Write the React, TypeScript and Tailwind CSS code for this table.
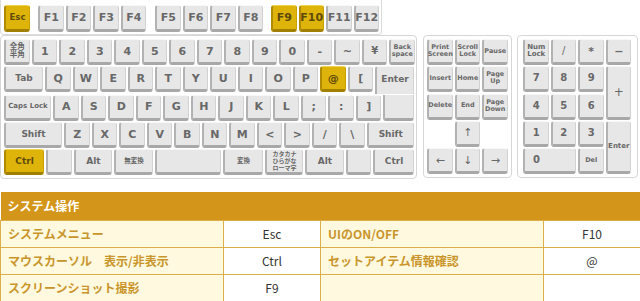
import React from 'react';

type Shape = 'full' | 'top' | 'bottom';

interface KeyProps {
  l?: React.ReactNode;
  w?: string;
  h?: string;
  t?: string;
  hl?: boolean;
  shape?: Shape;
  x?: string;
}

const edges: Record<Shape, string> = {
  full: 'rounded-[3px] border-t border-r border-l-2 border-b-[3px]',
  top: 'rounded-t-[3px] border-t border-r border-l-2',
  bottom: 'rounded-b-[3px] border-r border-l-2 border-b-[3px]',
};

const grey = 'bg-[#e7e7e7] border-t-[#f7f7f7] border-r-[#d2d2d2] border-l-[#b2b2b2] border-b-[#a8a8a8] text-[#686868]';
const gold = 'bg-[#dfb40a] border-t-[#f0d24a] border-r-[#c9a200] border-l-[#b08b00] border-b-[#a17f00] text-[#5e4b08]';

function Key({ l, w = 'w-[25.5px]', h = 'h-[26px]', t = 'text-[11px]', hl, shape = 'full', x = '' }: KeyProps) {
  return (
    <div className={`flex shrink-0 items-center justify-center whitespace-nowrap text-center font-bold leading-none ${edges[shape]} ${hl ? gold : grey} ${w} ${h} ${t} ${x}`}>
      {l}
    </div>
  );
}

const two = (a: string, b: string) => (
  <span className="block shrink-0 whitespace-nowrap leading-[1.05]">
    {a}
    <br />
    {b}
  </span>
);

const row1 = ['1', '2', '3', '4', '5', '6', '7', '8', '9', '0', '-', '~', '¥'];
const row2 = ['Q', 'W', 'E', 'R', 'T', 'Y', 'U', 'I', 'O', 'P', '@', '['];
const row3 = ['A', 'S', 'D', 'F', 'G', 'H', 'J', 'K', 'L', ';', ':', ']'];
const row4 = ['Z', 'X', 'C', 'V', 'B', 'N', 'M', '<', '>', '/', '\\'];

const rows = [
  { name: 'システムメニュー', key: 'Esc', name2: 'UIのON/OFF', key2: 'F10' },
  { name: 'マウスカーソル　表示/非表示', key: 'Ctrl', name2: 'セットアイテム情報確認', key2: '@' },
  { name: 'スクリーンショット撮影', key: 'F9', name2: '', key2: '' },
];

export default function App() {
  return (
    <div className="w-[640px] h-[301px] overflow-hidden bg-white font-['DejaVu_Sans','Noto_Sans_CJK_JP',sans-serif]">
      <div className="h-[192px]">
        {/* function keys */}
        <div className="flex h-[35px] w-[382px] items-start rounded-b-[4px] border border-t-0 border-[#dcdcdc] pl-[3px] pt-[5px]">
          <Key l="Esc" hl w="w-[26px]" h="h-[27px]" t="text-[8.5px]" />
          <div className="ml-[8px] flex gap-[2px]">
            {['F1', 'F2', 'F3', 'F4'].map((k) => (
              <Key key={k} l={k} h="h-[27px]" />
            ))}
          </div>
          <div className="ml-[9px] flex gap-[2px]">
            {['F5', 'F6', 'F7', 'F8'].map((k) => (
              <Key key={k} l={k} h="h-[27px]" />
            ))}
          </div>
          <div className="ml-[8px] flex gap-[2px]">
            {['F9', 'F10', 'F11', 'F12'].map((k) => (
              <Key key={k} l={k} h="h-[27px]" hl={k === 'F9' || k === 'F10'} />
            ))}
          </div>
        </div>

        <div className="flex items-start">
          {/* main block */}
          <div className="flex w-[417px] flex-col gap-[1.25px] rounded-[4px] border border-[#d6d6d6] px-[3px] pb-[3px] pt-[3px]">
            <div className="flex gap-[2px]">
              <Key l={two('全角', '半角')} t="text-[7.5px]" />
              {row1.map((k) => (
                <Key key={k} l={k} t={k === '¥' ? 'text-[10px]' : 'text-[11px]'} />
              ))}
              <Key l={two('Back', 'space')} t="text-[6.5px]" />
            </div>
            <div className="flex items-start gap-[2px]">
              <Key l="Tab" w="w-[39px]" t="text-[9px]" />
              {row2.map((k) => (
                <Key key={k} l={k} hl={k === '@'} />
              ))}
              <Key l="Enter" w="w-[39px]" h="h-[27.25px]" t="text-[9px]" shape="top" x="pb-[1px]" />
            </div>
            <div className="flex gap-[2px]">
              <Key l="Caps Lock" w="w-[47px]" t="text-[7px]" />
              {row3.map((k) => (
                <Key key={k} l={k} />
              ))}
              <Key w="w-[31px]" shape="bottom" />
            </div>
            <div className="flex gap-[2px]">
              <Key l="Shift" w="w-[58px]" t="text-[9px]" />
              {row4.map((k) => (
                <Key key={k} l={k} />
              ))}
              <Key l="Shift" w="w-[47.5px]" t="text-[9px]" />
            </div>
            <div className="flex gap-[2px]">
              <Key l="Ctrl" hl w="w-[40px]" t="text-[9px]" />
              <Key w="w-[26px]" />
              <Key l="Alt" w="w-[38px]" t="text-[9px]" />
              <Key l="無変換" w="w-[39px]" t="text-[6.5px]" />
              <Key w="w-[66px]" />
              <Key l="変換" w="w-[40px]" t="text-[6.5px]" />
              <Key
                l={
                  <span className="block shrink-0 whitespace-nowrap leading-[1.1]">
                    カタカナ
                    <br />
                    ひらがな
                    <br />
                    ローマ字
                  </span>
                }
                w="w-[38px]"
                t="text-[6px]"
              />
              <Key l="Alt" w="w-[39px]" t="text-[9px]" />
              <Key w="w-[25px]" />
              <Key l="Ctrl" w="w-[41px]" t="text-[9px]" />
            </div>
          </div>

          {/* navigation block */}
          <div className="ml-[6px] grid w-[89px] grid-cols-[repeat(3,25.5px)] grid-rows-[repeat(5,26px)] gap-x-[2px] gap-y-[1.25px] rounded-[4px] border border-[#d6d6d6] px-[3px] pb-[3px] pt-[3px]">
            <Key l={two('Print', 'Screen')} w="w-full" h="h-full" t="text-[6.5px]" />
            <Key l={two('Scroll', 'Lock')} w="w-full" h="h-full" t="text-[6.5px]" />
            <Key l="Pause" w="w-full" h="h-full" t="text-[6.5px]" />
            <Key l="Insert" w="w-full" h="h-full" t="text-[6.5px]" />
            <Key l="Home" w="w-full" h="h-full" t="text-[6.5px]" />
            <Key l={two('Page', 'Up')} w="w-full" h="h-full" t="text-[6.5px]" />
            <Key l="Delete" w="w-full" h="h-full" t="text-[6.5px]" />
            <Key l="End" w="w-full" h="h-full" t="text-[6.5px]" />
            <Key l={two('Page', 'Down')} w="w-full" h="h-full" t="text-[6.5px]" />
            <div />
            <Key l="↑" w="w-full" h="h-full" t="text-[11px] !font-normal" />
            <div />
            <Key l="←" w="w-full" h="h-full" t="text-[11px] !font-normal" />
            <Key l="↓" w="w-full" h="h-full" t="text-[11px] !font-normal" />
            <Key l="→" w="w-full" h="h-full" t="text-[11px] !font-normal" />
          </div>

          {/* numeric keypad */}
          <div className="ml-[5px] grid w-[121px] grid-cols-[repeat(4,25.5px)] grid-rows-[repeat(5,26px)] gap-x-[2px] gap-y-[1.25px] rounded-[4px] border border-[#d6d6d6] pb-[3px] pl-[5px] pt-[3px]">
            <Key l={two('Num', 'Lock')} w="w-full" h="h-full" t="text-[7px]" />
            <Key l="/" w="w-full" h="h-full" t="text-[10px] !font-normal" />
            <Key l="*" w="w-full" h="h-full" t="text-[11px]" />
            <Key l="−" w="w-full" h="h-full" t="text-[11px]" />
            <Key l="7" w="w-full" h="h-full" t="text-[10px]" />
            <Key l="8" w="w-full" h="h-full" t="text-[10px]" />
            <Key l="9" w="w-full" h="h-full" t="text-[10px]" />
            <Key l="+" w="w-full" h="h-full" t="text-[12px] !font-normal" x="row-span-2" />
            <Key l="4" w="w-full" h="h-full" t="text-[10px]" />
            <Key l="5" w="w-full" h="h-full" t="text-[10px]" />
            <Key l="6" w="w-full" h="h-full" t="text-[10px]" />
            <Key l="1" w="w-full" h="h-full" t="text-[10px]" />
            <Key l="2" w="w-full" h="h-full" t="text-[10px]" />
            <Key l="3" w="w-full" h="h-full" t="text-[10px]" />
            <Key l="Enter" w="w-full" h="h-full" t="text-[7px]" x="row-span-2" />
            <Key l="0" w="w-full" h="h-full" t="text-[10px]" x="col-span-2 !justify-start pl-[8px]" />
            <Key l="Del" w="w-full" h="h-full" t="text-[6.5px]" />
          </div>
        </div>
      </div>

      {/* shortcut table */}
      <table className="w-[640px] table-fixed border-collapse font-['Noto_Sans_CJK_JP',sans-serif] text-[12px]">
        <colgroup>
          <col className="w-[223px]" />
          <col className="w-[97px]" />
          <col className="w-[223px]" />
          <col className="w-[97px]" />
        </colgroup>
        <thead>
          <tr>
            <th colSpan={4} className="h-[28px] bg-[#d4961a] pl-[7px] text-left font-bold text-white">
              システム操作
            </th>
          </tr>
        </thead>
        <tbody>
          {rows.map((r) => (
            <tr key={r.name} className="h-[27px]">
              <td className="border border-[#dcae48] bg-[#fffadf] pl-[7px] font-bold text-[#c9952b]">{r.name}</td>
              <td className="border border-[#dcae48] bg-white text-center text-[#333]">{r.key}</td>
              <td className="border border-[#dcae48] bg-[#fffadf] pl-[7px] font-bold text-[#c9952b]">{r.name2}</td>
              <td className="border border-[#dcae48] bg-white text-center text-[#333]">{r.key2}</td>
            </tr>
          ))}
        </tbody>
      </table>
    </div>
  );
}
